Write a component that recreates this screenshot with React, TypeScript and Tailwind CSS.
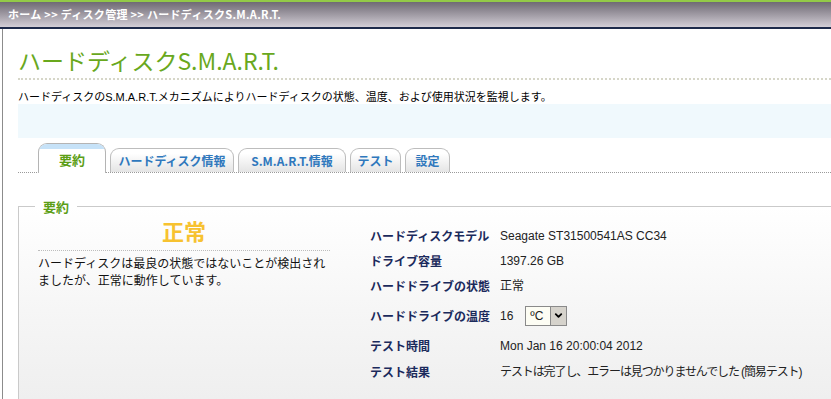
import { ChevronDown } from 'lucide-react'

const jp = "font-['Noto_Sans_CJK_JP',sans-serif]"
const mixed = "font-['Liberation_Sans','Noto_Sans_CJK_JP',sans-serif]"

type Tab = { label: string; width: string; active?: boolean }

const TABS: Tab[] = [
  { label: '要約', width: 'w-[68px]', active: true },
  { label: 'ハードディスク情報', width: 'w-[124px]' },
  { label: 'S.M.A.R.T.情報', width: 'w-[108px]' },
  { label: 'テスト', width: 'w-[51px]' },
  { label: '設定', width: 'w-[45px]' },
]

const ROWS: { label: string; value: string; height: string; temp?: boolean; tight?: boolean }[] = [
  { label: 'ハードディスクモデル', value: 'Seagate ST31500541AS CC34', height: 'h-[25px]' },
  { label: 'ドライブ容量', value: '1397.26 GB', height: 'h-[25px]' },
  { label: 'ハードドライブの状態', value: '正常', height: 'h-[26px]' },
  { label: 'ハードドライブの温度', value: '16', height: 'h-[33px]', temp: true },
  { label: 'テスト時間', value: 'Mon Jan 16 20:00:04 2012', height: 'h-[27px]' },
  {
    label: 'テスト結果',
    value: 'テストは完了し、エラーは見つかりませんでした (簡易テスト)',
    height: 'h-[25px]',
    tight: true,
  },
]

function TabItem({ tab }: { tab: Tab }) {
  if (tab.active) {
    return (
      <div
        className={`${tab.width} h-[30px] -mb-px flex flex-col rounded-t-[9px] border border-b-0 border-[#b4b4b4] bg-white overflow-hidden`}
      >
        <div className="h-[5px] bg-[#c6e2f8]" />
        <div className={`flex flex-1 items-center justify-center pb-[2px] text-[13px] font-bold text-[#5c9e16] ${jp}`}>
          {tab.label}
        </div>
      </div>
    )
  }
  return (
    <div
      className={`${tab.width} h-[24px] flex items-center justify-center rounded-t-[9px] border border-b-0 border-[#bdbdbd] bg-gradient-to-b from-white from-20% to-[#e4e4e4] text-[12px] font-bold text-[#2f78bd] ${jp}`}
    >
      {tab.label}
    </div>
  )
}

function TempSelect() {
  return (
    <div className="ml-[12px] flex h-[20px] w-[42px] items-stretch border border-[#8a8a8a] bg-[#fdfdf4]">
      <span className={`flex-1 pl-[4px] text-[12px] leading-[18px] text-[#222] ${mixed}`}>ºC</span>
      <span className="flex w-[16px] items-center justify-center border-l border-[#8a8a8a] bg-[#d6d3cc]">
        <ChevronDown className="h-[11px] w-[11px] text-black" strokeWidth={4} aria-hidden />
      </span>
    </div>
  )
}

export default function App() {
  return (
    <div className="h-[399px] w-[831px] overflow-hidden bg-white">
      <div className="h-[2px] bg-[#93c948]" />
      <div className="flex h-[27px] items-center border-b-2 border-[#1d2a4a] bg-gradient-to-b from-[#6f6a74] to-[#d3ced6] pl-[8px]">
        <span className={`text-[11px] font-bold tracking-[0.3px] text-white ${jp}`}>
          ホーム &gt;&gt; ディスク管理 &gt;&gt; ハードディスクS.M.A.R.T.
        </span>
      </div>
      <div className="ml-[2px] h-[370px] overflow-hidden border-l border-[#8c8c8c] pl-[15px]">
        <div className="border-b-2 border-dotted border-[#d6d6c8] pb-[3px] pt-[16px]">
          <h1 className={`text-[23px] leading-[30px] text-[#69a81d] ${jp}`}>ハードディスクS.M.A.R.T.</h1>
        </div>
        <p className={`pt-[11px] text-[11px] leading-[13px] text-black ${mixed}`}>
          ハードディスクのS.M.A.R.T.メカニズムによりハードディスクの状態、温度、および使用状況を監視します。
        </p>
        <div className="h-[34px] bg-[#f0f9fd]" />

        <div className="mt-[5px] flex items-end gap-[4px] border-b border-dotted border-[#9a9a9a] pl-[20px]">
          {TABS.map((tab) => (
            <TabItem key={tab.label} tab={tab} />
          ))}
        </div>

        <fieldset className="mt-[25px] h-[240px] min-w-0 border border-r-0 border-[#cacaca] bg-gradient-to-b from-white via-[#f5f5f5] to-[#ececec] px-[16px]">
          <legend className={`px-[8px] text-[13px] font-bold leading-[17px] text-[#5c9e16] ${jp}`}>要約</legend>
          <div className="flex">
            <div className="ml-[3px] w-[292px] shrink-0 pt-[2px]">
              <div className={`border-b border-dotted border-[#bdbdbd] pb-[7px] text-center text-[22px] font-bold leading-[26px] text-[#f7c230] ${jp}`}>
                正常
              </div>
              <p className={`mt-[3px] text-[12px] leading-[17px] text-[#111] ${jp}`}>
                ハードディスクは最良の状態ではないことが検出されましたが、正常に動作しています。
              </p>
            </div>
            <div className="ml-[40px] shrink-0 pt-[8px]">
              {ROWS.map((row) => (
                <div key={row.label} className={`${row.height} flex items-center whitespace-nowrap`}>
                  <span className={`w-[130px] shrink-0 text-[12px] font-bold text-[#1b2a5c] ${jp}`}>{row.label}</span>
                  <span className={`text-[12px] text-[#222] ${row.tight ? 'tracking-[-1.1px]' : ''} ${mixed}`}>
                    {row.value}
                  </span>
                  {row.temp && <TempSelect />}
                </div>
              ))}
            </div>
          </div>
        </fieldset>
      </div>
    </div>
  )
}
